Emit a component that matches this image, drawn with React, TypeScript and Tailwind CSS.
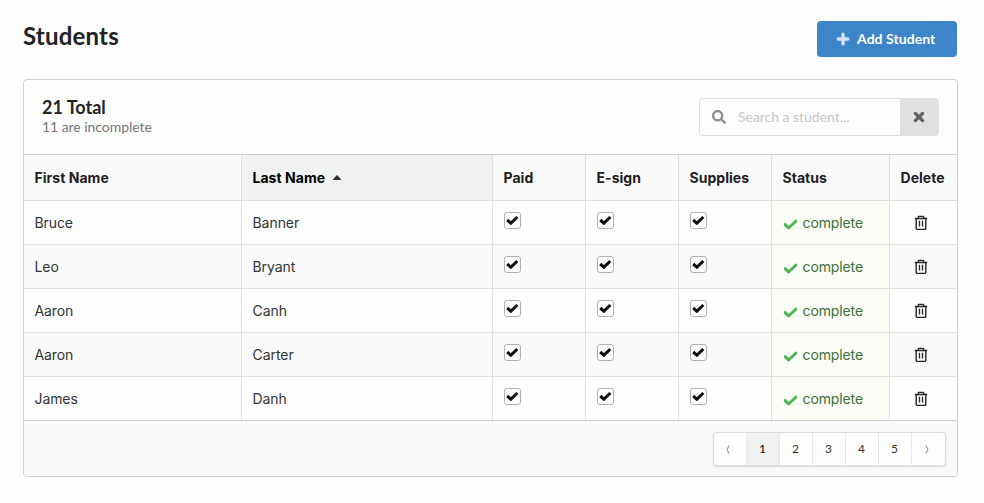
import { useState } from "react";
import { FaSearch } from "react-icons/fa";

const students = [
  { first: "Bruce", last: "Banner" },
  { first: "Leo", last: "Bryant" },
  { first: "Aaron", last: "Canh" },
  { first: "Aaron", last: "Carter" },
  { first: "James", last: "Danh" },
];

const columns = "grid grid-cols-[218px_251px_93px_93px_93px_118px_67px]";

function CheckBox() {
  return (
    <span className="mt-[11px] ml-[11px] flex h-[17px] w-[17px] items-center justify-center rounded-[3px] border border-[#b2b2b2] bg-white">
      <svg width="13" height="11" viewBox="0 0 13 11" fill="none" className="-mt-px -ml-px">
        <path d="M1.2 5 4.9 8.2 11.4 2" stroke="#111" strokeWidth="3" />
      </svg>
    </span>
  );
}

function StatusCheck() {
  return (
    <svg width="16" height="13" viewBox="0 0 16 13" fill="none" className="mt-[4px] shrink-0">
      <path d="M2.2 6.6 5.6 10 13 3" stroke="#50b353" strokeWidth="2.9" strokeLinecap="round" strokeLinejoin="round" />
    </svg>
  );
}

function TrashIcon() {
  return (
    <svg width="14" height="16" viewBox="0 0 14 16" fill="none" stroke="#222426">
      <path d="M.8 3.5H13.2" strokeWidth="1.4" />
      <path d="M4.3 3.2V2.1Q4.3 1.4 5 1.4H9Q9.7 1.4 9.7 2.1V3.2" strokeWidth="1.3" />
      <path d="M2.2 3.5V13.2Q2.2 14.4 3.4 14.4H10.6Q11.8 14.4 11.8 13.2V3.5" strokeWidth="1.4" />
      <path d="M5.5 5.7V11.6M8.5 5.7V11.6" strokeWidth="1.3" />
    </svg>
  );
}

function PageArrow({ next = false }: { next?: boolean }) {
  return (
    <svg width="4" height="9" viewBox="0 0 4 9" fill="none" className={next ? "rotate-180" : ""}>
      <path d="M3.1.5 1 4.5 3.1 8.5" stroke="#88898b" />
    </svg>
  );
}

export default function App() {
  const [query, setQuery] = useState("");

  return (
    <main className="h-[503px] w-[984px] overflow-hidden bg-[#fdfdfd] pt-[21px] pl-[23px] font-['Inter',sans-serif] text-[14px] text-[#333435]">
      <header className="flex h-9 w-[934px] items-start justify-between font-['Lato',sans-serif]">
        <h1 className="text-[24px] leading-[30px] font-bold tracking-[0.2px] text-[#222324]">Students</h1>
        <button className="flex h-9 w-[140px] items-center rounded bg-[#3d85c9] pl-[19px] text-[14px] font-bold text-white">
          <svg width="14" height="14" viewBox="0 0 14 14" fill="none" className="mr-[7px]">
            <path d="M7 2.2V11.8M2.2 7H11.8" stroke="#d5e4f3" strokeWidth="3.4" strokeLinecap="round" />
          </svg>
          <span className="-mt-[2px] tracking-[0.05px]">Add Student</span>
        </button>
      </header>

      <section className="mt-[22px] h-[398px] w-[935px] overflow-hidden rounded border border-[#d0d1d2]">
        <div className="flex h-[74px] items-start justify-between pt-[18px] pr-[18px] pl-[17px] font-['Lato',sans-serif]">
          <div className="-mt-px pl-px">
            <h2 className="text-[18px] leading-[20px] font-bold text-[#222324]">21 Total</h2>
            <p className="text-[14px] leading-[19px] tracking-[-0.05px] text-[#76777a]">11 are incomplete</p>
          </div>
          <div className="flex h-[38px] w-[240px]">
            <label className="flex w-[201px] items-center rounded-l border border-r-0 border-[#dddedf] bg-[#fdfdfd] pl-[12px]">
              <FaSearch className="mr-[12px] h-[14px] w-[14px] shrink-0 text-[#8b8c8d]" />
              <input
                value={query}
                onChange={(e) => setQuery(e.target.value)}
                placeholder="Search a student..."
                className="-mt-[2px] w-full min-w-0 bg-transparent text-[14px] tracking-[-0.03px] outline-none placeholder:text-[#c5c6c7]"
              />
            </label>
            <button onClick={() => setQuery("")} aria-label="Clear" className="flex w-[39px] items-center justify-center rounded-r bg-[#dfe0e1] pr-px">
              <svg width="12" height="12" viewBox="0 0 12 12" fill="none">
                <path d="M2.4 2.4 9.6 9.6M9.6 2.4 2.4 9.6" stroke="#606162" strokeWidth="3.3" strokeLinecap="round" />
              </svg>
            </button>
          </div>
        </div>

        <div className={`${columns} h-[47px] border-y border-t-[#d0d1d2] border-b-[#dfe0e1] bg-[#fafafb] font-bold text-[#1f2021]`}>
          {["First Name", "Last Name", "Paid", "E-sign", "Supplies", "Status", "Delete"].map((title, i) => (
            <div
              key={title}
              className={`flex items-center px-[10.5px] ${i < 6 ? "border-r border-[#dfe0e1]" : ""} ${i === 1 ? "bg-[#f0f2f2] text-black" : ""}`}
            >
              <span className="tracking-[0.04px]">{title}</span>
              {i === 1 && (
                <svg width="10" height="5" viewBox="0 0 10 5" className="ml-[6.5px]">
                  <path d="M.5 5 4.2.7Q5 0 5.8.7L9.5 5Z" fill="#333" />
                </svg>
              )}
            </div>
          ))}
        </div>

        {students.map((student, i) => (
          <div
            key={student.last}
            className={`${columns} h-[44px] border-b ${i === 4 ? "border-[#d0d1d2]" : "border-[#e1e2e3]"} ${i % 2 ? "bg-[#fafafb]" : "bg-[#fdfdfd]"}`}
          >
            <div className="flex items-center border-r border-[#e1e2e3] pl-[10.5px] tracking-[-0.1px]">{student.first}</div>
            <div className="flex items-center border-r border-[#e1e2e3] pl-[10.5px] tracking-[-0.05px]">{student.last}</div>
            <div className="border-r border-[#e1e2e3]"><CheckBox /></div>
            <div className="border-r border-[#e1e2e3]"><CheckBox /></div>
            <div className="border-r border-[#e1e2e3]"><CheckBox /></div>
            <div className="flex items-center border-r border-[#e1e2e3] bg-[#fbfcf6] pl-[11px] text-[#3e703f]">
              <StatusCheck />
              <span className="ml-[3.5px] tracking-[-0.12px]">complete</span>
            </div>
            <button aria-label="Delete" className="flex items-center justify-center pr-[5px]"><TrashIcon /></button>
          </div>
        ))}

        <footer className="flex h-[56px] justify-end bg-[#fafafb] pt-[11px] pr-[11px]">
          <nav className="grid h-[34px] w-[233px] grid-cols-[33px_33px_33px_33px_33px_33px_33px] overflow-hidden rounded border border-[#dcddde] bg-[#fdfdfd] font-['Lato',sans-serif] text-[12px] shadow-[0_1px_2px_rgba(34,36,38,0.15)]">
            {["prev", "1", "2", "3", "4", "5", "next"].map((page, i) => (
              <button
                key={page}
                aria-label={page}
                className={`flex items-center justify-center ${i < 6 ? "border-r border-[#e6e7e8]" : ""} ${i === 1 ? "bg-[#f0f2f2] text-black" : ""} ${i === 0 || i === 6 ? "pr-[4px]" : "pr-px"}`}
              >
                {i === 0 ? <PageArrow /> : i === 6 ? <PageArrow next /> : page}
              </button>
            ))}
          </nav>
        </footer>
      </section>
    </main>
  );
}
